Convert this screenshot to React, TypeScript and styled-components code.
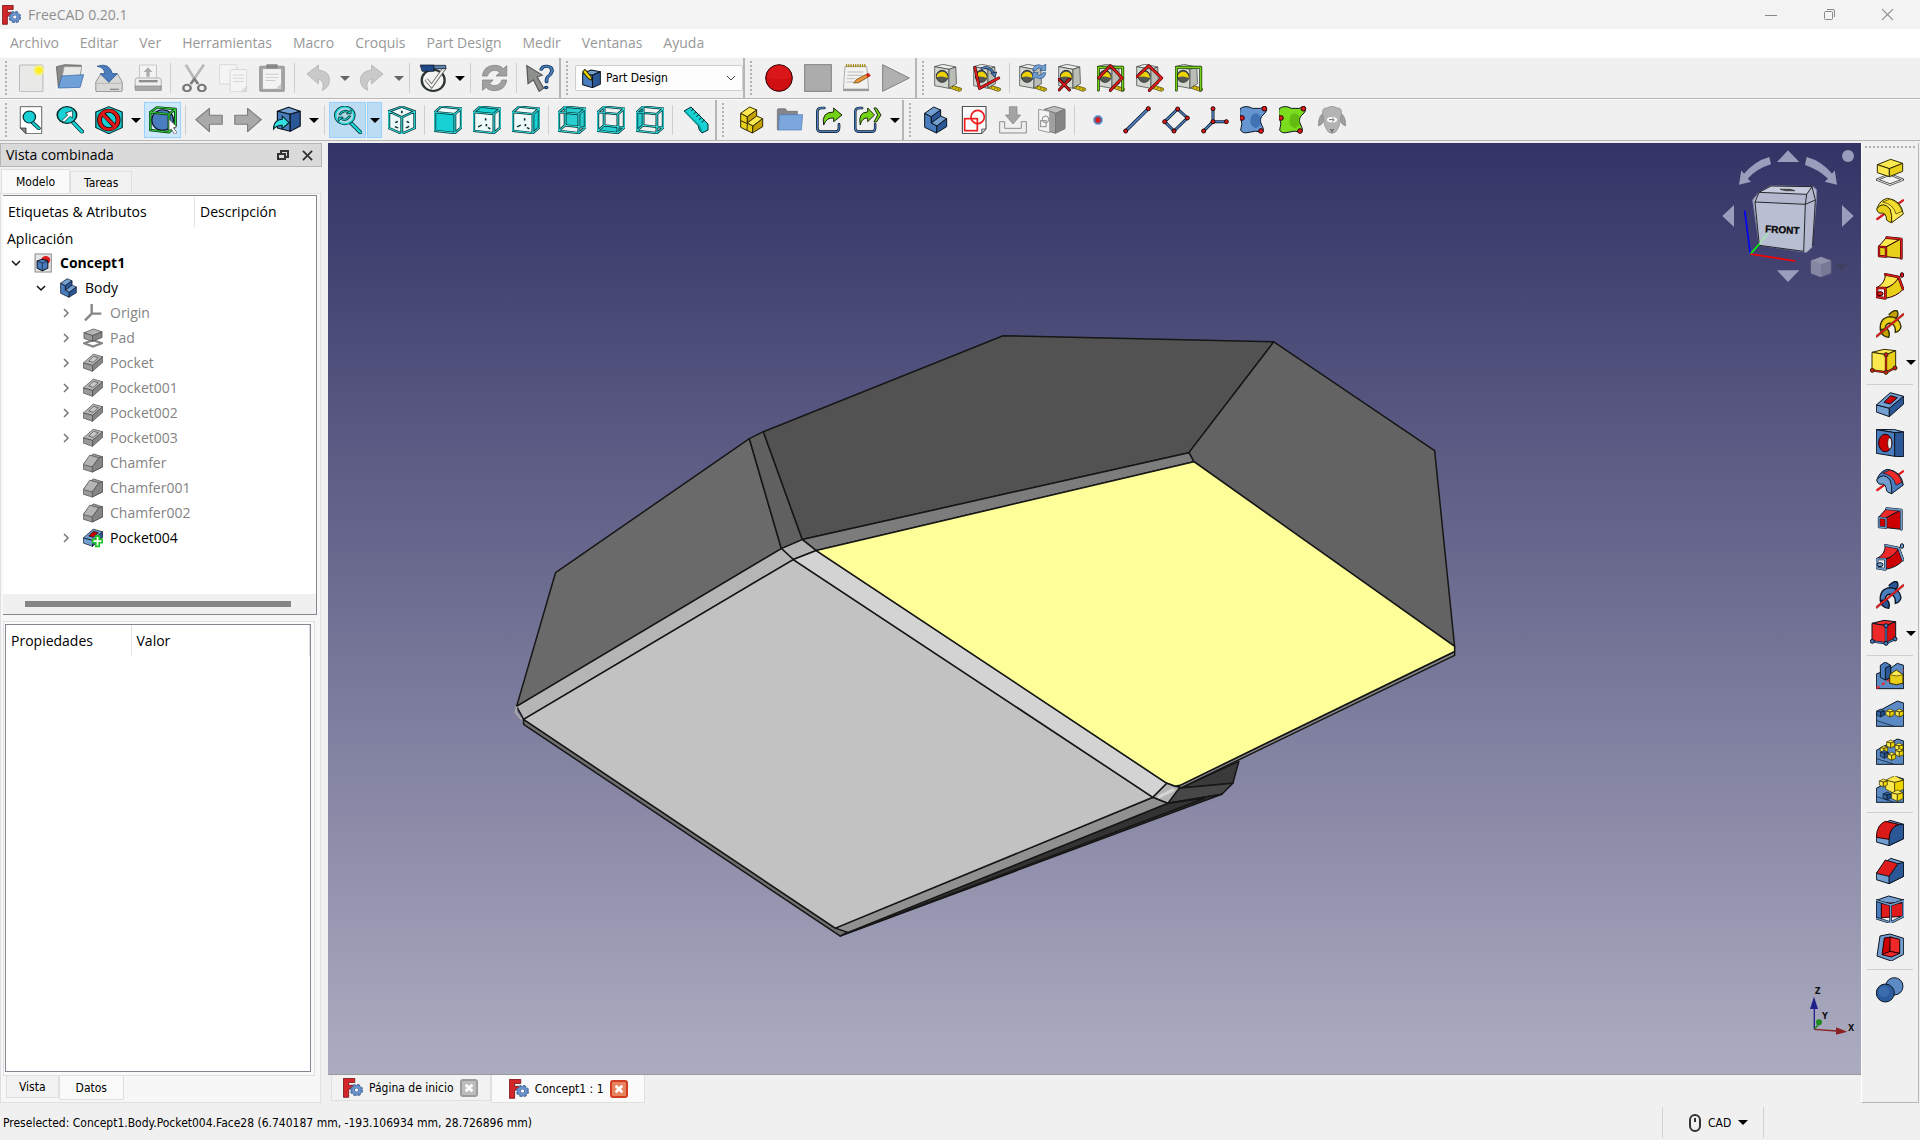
import React from "react";
import styled, { createGlobalStyle, css } from "styled-components";

const ui = `"Open Sans", "Noto Sans", sans-serif`;
const small = `"DejaVu Sans Condensed", "DejaVu Sans", sans-serif`;
const chrome = "#f0f0f0";
const edge = "#b6b6b6";
const soft = "#e0e0e0";
const frame = "#828790";

const GlobalStyle = createGlobalStyle`
  * { box-sizing: border-box; }
  body { margin: 0; background: ${chrome}; font-family: ${ui}; font-size: 14px; color: #000; }
  button, select { font: inherit; color: inherit; margin: 0; padding: 0; border: 0; background: none; }
  svg { display: block; flex: none; }
`;

/* ---------- layout ---------- */

const Window = styled.div`
  display: flex;
  flex-direction: column;
  height: 100vh;
  min-height: 700px;
  overflow: hidden;
  background: ${chrome};
`;

const TitleBar = styled.header`
  display: flex;
  align-items: center;
  height: 29px;
  flex: none;
  padding: 0 4px 0 2px;
  background: #f3f3f3;
`;

const AppTitle = styled.h1`
  flex: 1;
  margin: 0 0 0 7px;
  font-size: 14px;
  font-weight: 400;
  line-height: 20px;
  color: #8f8f8f;
`;

const WindowButton = styled.button`
  display: flex;
  justify-content: center;
  align-items: center;
  width: 58px;
  height: 28px;
`;

const MenuBar = styled.nav`
  display: flex;
  gap: 1px;
  height: 28px;
  flex: none;
  background: #fff;
`;

const MenuItem = styled.button`
  padding: 0 10px;
  font-size: 14px;
  line-height: 28px;
  color: #989898;
`;

const ToolRow = styled.div`
  display: flex;
  flex: none;
  height: 42px;
  border-top: 1px solid #fafafa;
`;

const Bar = styled.div<{ $fill?: boolean }>`
  display: flex;
  align-items: center;
  flex: ${(p) => (p.$fill ? "1 0 auto" : "none")};
  border-right: ${(p) => (p.$fill ? "0" : `2px solid ${edge}`)};
  border-bottom: 1px solid ${edge};
`;

const Grip = styled.span`
  width: 2px;
  height: 34px;
  margin: 0 4px 0 5px;
  background: repeating-linear-gradient(#b0b0b0 0 2px, transparent 2px 4px);
`;

const activeLook = css<{ $active?: boolean; $deep?: boolean }>`
  ${(p) => p.$active && css`
    background: ${p.$deep ? "#bbdcf2" : "#cce8ff"};
    border-color: #99d1ff;
  `}
`;

const ToolButton = styled.button<{ $active?: boolean; $deep?: boolean }>`
  display: flex;
  justify-content: center;
  align-items: center;
  width: 37px;
  height: 36px;
  margin: 0 1px;
  border: 1px solid transparent;
  ${activeLook}
`;

const ArrowButton = styled.button<{ $active?: boolean; $deep?: boolean }>`
  display: flex;
  justify-content: center;
  align-items: center;
  width: 15px;
  height: 36px;
  border: 1px solid transparent;
  ${activeLook}
`;

const Divider = styled.span`
  width: 1px;
  height: 30px;
  margin: 0 3px;
  background: #cfcfcf;
`;

const Combo = styled.label`
  display: flex;
  align-items: center;
  gap: 5px;
  width: 168px;
  height: 26px;
  padding: 0 6px;
  border: 1px solid #cfcfcf;
  border-radius: 2px;
  background: #fdfdfd;
`;

const ComboSelect = styled.select`
  flex: 1;
  min-width: 0;
  appearance: none;
  font-family: ${small};
  font-size: 12px;
  outline: none;
`;

const Work = styled.main`
  display: flex;
  flex: 1;
  min-height: 0;
  padding-top: 2px;
`;

const Dock = styled.aside`
  display: flex;
  flex-direction: column;
  width: 322px;
  margin-right: 6px;
`;

const DockTitle = styled.div`
  display: flex;
  align-items: center;
  height: 24px;
  flex: none;
  padding: 0 1px 0 5px;
  border: 1px solid ${edge};
  background: #dadada;
  h2 { flex: 1; margin: 0; font-size: 14px; font-weight: 400; line-height: 20px; }
`;

const DockButton = styled.button`
  display: flex;
  justify-content: center;
  align-items: center;
  width: 25px;
  height: 20px;
`;

const TabRow = styled.div<{ $low?: boolean }>`
  display: flex;
  flex: none;
  align-items: ${(p) => (p.$low ? "flex-start" : "flex-end")};
  height: ${(p) => (p.$low ? "26px" : "24px")};
  padding-left: ${(p) => (p.$low ? "3px" : "1px")};
  margin-top: ${(p) => (p.$low ? "0" : "2px")};
`;

const Tab = styled.button<{ $on?: boolean }>`
  display: flex;
  align-items: center;
  height: ${(p) => (p.$on ? "24px" : "22px")};
  padding: 0 ${(p) => (p.$on ? "14px" : "13px")};
  border: 1px solid ${soft};
  border-width: 1px 1px 0 1px;
  background: ${(p) => (p.$on ? "#fafafa" : "#f2f2f2")};
  font-family: ${small};
  font-size: 12px;
`;

const LowTab = styled(Tab)`
  padding: 0 ${(p) => (p.$on ? "16px" : "12px")};
  border-width: 0 1px 1px 1px;
`;

const Pane = styled.div`
  display: flex;
  flex-direction: column;
  flex: 1;
  min-height: 0;
  width: 321px;
  padding: 1px 2px 0 2px;
  border: 1px solid ${soft};
  background: #f7f7f7;
`;

const TreeBox = styled.section`
  display: flex;
  flex-direction: column;
  flex: none;
  height: 420px;
  margin-right: 1px;
  border: 1px solid ${frame};
  border-left: 0;
  background: #fff;
`;

const TreeHead = styled.div`
  display: grid;
  grid-template-columns: 191px 1fr;
  margin-top: 1px;
  line-height: 30px;
  span { padding-left: 5px; }
  span + span { border-left: 1px solid #e2e2e2; padding-left: 5px; }
`;

const TreeList = styled.ul`
  flex: 1;
  margin: 0;
  padding: 0;
  list-style: none;
`;

const TreeRow = styled.li<{ $depth: number; $dim?: boolean; $bold?: boolean }>`
  display: flex;
  align-items: center;
  height: 25px;
  padding-left: ${(p) => p.$depth * 25 + 6}px;
  color: ${(p) => (p.$dim ? "#838383" : "#000")};
  font-weight: ${(p) => (p.$bold ? 700 : 400)};
  span { padding-left: 7px; }
`;

const TreeRoot = styled.li`
  padding-left: 4px;
  line-height: 23px;
`;

const Twist = styled.button`
  display: flex;
  justify-content: center;
  align-items: center;
  width: 14px;
  height: 20px;
  margin-right: 10px;
`;

const ScrollTrack = styled.div`
  height: 20px;
  flex: none;
  padding: 7px 25px 0 22px;
  background: #f0f0f0;
`;

const ScrollThumb = styled.div`
  height: 6px;
  background: #858585;
`;

const PropPane = styled.section`
  display: flex;
  flex: 1;
  min-height: 0;
  margin: 6px 3px 0 0;
  padding: 2px 3px 3px 1px;
  border: 1px solid ${soft};
  background: #fafafa;
`;

const PropBox = styled.div`
  flex: 1;
  border: 1px solid ${frame};
  background: #fff;
`;

const PropTable = styled.table`
  width: 100%;
  border-collapse: collapse;
  table-layout: fixed;
  th {
    padding: 0 0 0 5px;
    text-align: left;
    font-weight: 400;
    line-height: 31px;
    border-right: 1px solid #e2e2e2;
  }
  th:first-child { width: 125px; }
`;

const Center = styled.section`
  display: flex;
  flex-direction: column;
  flex: 1;
  min-width: 0;
`;

const Viewport = styled.div`
  position: relative;
  flex: 1;
  min-height: 0;
  border-bottom: 1px solid #9a9a9a;
  background: linear-gradient(#333366, #acacc1);
  overflow: hidden;
`;

const Scene = styled.svg`
  width: 100%;
  height: 100%;
`;

const NavCube = styled.svg`
  position: absolute;
  top: 0;
  right: 0;
`;

const AxisCross = styled.svg`
  position: absolute;
  right: 0;
  bottom: 34px;
`;

const DocTabs = styled.div`
  display: flex;
  align-items: flex-start;
  height: 28px;
  flex: none;
  padding-left: 3px;
`;

const DocTab = styled.div<{ $on?: boolean }>`
  display: flex;
  align-items: center;
  gap: 6px;
  height: ${(p) => (p.$on ? "28px" : "26px")};
  padding: 0 ${(p) => (p.$on ? "16px" : "12px")} 0 ${(p) => (p.$on ? "17px" : "11px")};
  border: 1px solid ${soft};
  border-top: 0;
  background: ${(p) => (p.$on ? "#fafafa" : "#f2f2f2")};
`;

const DocName = styled.button`
  font-family: ${small};
  font-size: 12px;
  line-height: 24px;
`;

const CloseTab = styled.button<{ $hot?: boolean }>`
  display: flex;
  justify-content: center;
  align-items: center;
  width: 18px;
  height: 18px;
  border: 2px solid ${(p) => (p.$hot ? "#d23c20" : "#9c9c9c")};
  border-radius: 3px;
  background: ${(p) => (p.$hot ? "#e8825f" : "#bdbdbd")};
`;

const SideBar = styled.div`
  display: flex;
  flex-direction: column;
  align-items: center;
  width: 58px;
  border-left: 1px solid #fff;
  border-right: 1px solid ${edge};
  border-bottom: 1px solid ${edge};
  margin-right: 1px;
`;

const SideGrip = styled.span`
  width: 50px;
  height: 2px;
  margin: 3px 0 6px;
  flex: none;
  background: repeating-linear-gradient(90deg, #b0b0b0 0 2px, transparent 2px 4px);
`;

const SideRow = styled.div<{ $menu?: boolean }>`
  display: flex;
  justify-content: ${(p) => (p.$menu ? "flex-end" : "center")};
  width: 100%;
  height: 38px;
  flex: none;
`;

const SideDivider = styled.span`
  width: 46px;
  height: 1px;
  flex: none;
  margin: 2px 0;
  background: #cfcfcf;
`;

const StatusBar = styled.footer`
  display: flex;
  align-items: center;
  height: 37px;
  flex: none;
  padding: 2px 156px 0 3px;
  font-family: ${small};
  font-size: 12px;
  output { flex: 1; }
`;

const NavStyle = styled.button`
  display: flex;
  align-items: center;
  gap: 7px;
  width: 102px;
  height: 31px;
  padding-left: 26px;
  border-left: 1px solid #d2d2d2;
  border-right: 1px solid #d2d2d2;
`;

const Spacer = styled.span`
  width: 3px;
`;

/* ---------- icon drawing ---------- */

type Draw = { box: [number, number, number, number]; art: React.ReactNode };

const TEAL = "#17d1d4";
const TEAL_L = "#34e0e2";
const TEAL_D = "#06989a";
const INK = "#0b1521";

const Wire = ({ d, c, o = INK, w = 4, k = 5 }: { d: string; c: string; o?: string; w?: number; k?: number }) => (
  <g fill="none" strokeLinecap="round" strokeLinejoin="round">
    <path d={d} stroke={o} strokeWidth={w + k} />
    <path d={d} stroke={c} strokeWidth={w} />
  </g>
);

const Face = ({ p, f, s = INK, w = 3 }: { p: string; f: string; s?: string; w?: number }) => (
  <polygon points={p} fill={f} stroke={s} strokeWidth={w} strokeLinejoin="round" />
);

const Dot = ({ x, y, r = 6, f = "#e01b1b", s = "#280000" }: { x: number; y: number; r?: number; f?: string; s?: string }) => (
  <circle cx={x} cy={y} r={r} fill={f} stroke={s} strokeWidth="3" />
);

const F = "2,19 53,25 53,84 2,77";
const T = "2,19 18,2 69,8 53,25";
const R = "53,25 69,8 69,67 53,84";
const BK = "18,2 69,8 69,67 18,60";
const BT = "2,77 18,60 69,67 53,84";
const LF = "2,19 18,2 18,60 2,77";
const solidFrame = "M2 19L53 25L53 84L2 77ZM2 19L18 2L69 8L53 25M69 8L69 67L53 84";
const openFrame = solidFrame + "M18 2L18 60L2 77M18 60L69 67";

const cube = (face: string, open: boolean): Draw => ({
  box: [0, 0, 71, 87],
  art: (
    <>
      {!open && <polygon points="2,19 18,2 69,8 69,67 53,84 2,77" fill="#eefafa" />}
      <polygon points={face} fill={open ? TEAL_D : TEAL} />
      {open && <polygon points={face} fill={TEAL_L} opacity="0.75" />}
      <Wire d={open ? openFrame : solidFrame} c={TEAL_L} o="#042a2a" w={3} k={4} />
      {!open && face !== F && <path d="M13 65l9-6M34 56v7M32 38v7M38 67l6 4" stroke="#042a2a" strokeWidth="4" />}
    </>
  ),
});

const Tape = () => (
  <g strokeLinejoin="round">
    <polygon points="146,103 185,115 185,121 178,124 146,113" fill="#e3c600" stroke="#302b00" strokeWidth="2" />
    <path d="M158 108v5M168 112v5M177 115v5" stroke="#302b00" strokeWidth="2" />
    <polygon points="103,50 128,43 168,51 147,58" fill="#eeeeec" stroke="#2e3436" strokeWidth="2" />
    <polygon points="103,50 147,58 147,115 103,107" fill="#d3d7cf" stroke="#2e3436" strokeWidth="2" />
    <polygon points="147,58 168,51 170,101 147,115" fill="#babdb6" stroke="#2e3436" strokeWidth="2" />
    <circle cx="126" cy="79" r="18" fill="#555753" stroke="#2e3436" strokeWidth="3" />
    <path d="M109 82a17 18 0 0 1 34 2q-16-8-34-2z" fill="#edd400" />
  </g>
);

const tape = (extra?: React.ReactNode): Draw => ({ box: [101, 42, 86, 84], art: <><Tape />{extra}</> });

const steps = (a: string, b: string, c: string, split?: boolean, s = INK): Draw => ({
  box: [58, 168, 84, 84],
  art: (
    <>
      <Face p="69,190 89,200 89,219 106,228 104,249 69,232" f={b} s={s} />
      <Face p="69,190 96,171 117,180 89,200" f={a} s={s} />
      <Face p="89,200 117,180 117,198 89,219" f={c} s={s} />
      <Face p="89,219 117,198 135,206 106,228" f={a} s={s} />
      <Face p="106,228 135,206 135,230 104,249" f={c} s={s} />
      {split && <path d="M69 212L89 221L88 241" fill="none" stroke={s} strokeWidth="3" />}
    </>
  ),
});

const undo = (flip: boolean): Draw => ({
  box: [0, 0, 68, 84],
  art: (
    <g transform={flip ? "translate(68 0) scale(-1 1)" : undefined}>
      <path d="M7 30L35 3V18Q64 22 62 52Q60 72 44 79Q52 52 35 45V60Z" fill="#c9c9c9" stroke="#b0b0b0" strokeWidth="2" />
    </g>
  ),
});

const bigArrow = (flip: boolean): Draw => ({
  box: [0, 0, 68, 84],
  art: (
    <g transform={flip ? "translate(68 0) scale(-1 1)" : undefined}>
      <path d="M2 41L35 7V28H66V55H35V77Z" fill="#a9a9a9" stroke="#7e7e7e" strokeWidth="3" strokeLinejoin="round" />
    </g>
  ),
});

const blob = (a: string, b: string): Draw => ({
  box: [1013, 168, 84, 84],
  art: (
    <>
      <path d="M1013 176Q1030 164 1050 175Q1075 178 1090 170Q1098 180 1085 192Q1068 205 1078 225Q1088 240 1078 247Q1060 240 1040 247Q1020 252 1015 240Q1022 220 1015 205Q1010 190 1013 176Z" fill={a} stroke={INK} strokeWidth="3" />
      <ellipse cx="1060" cy="212" rx="16" ry="22" fill={b} opacity="0.5" />
      <Dot x={1086} y={176} r={7} /><Dot x={1019} y={204} r={7} /><Dot x={1076} y={243} r={7} />
    </>
  ),
});

const revolve = (a: string, b: string, axis: string, s: string, mid: string): Draw => ({
  box: [528, 168, 84, 84],
  art: (
    <>
      <path d="M532 237L609 181" stroke={axis} strokeWidth="7" strokeLinecap="round" />
      <path d="M531 205Q540 180 562 175Q604 180 610 222L575 248Q573 212 531 205Z" fill={b} stroke={s} strokeWidth="3" strokeLinejoin="round" />
      <path d="M548 186L570 177Q598 186 606 214L588 222Q580 192 548 186Z" fill={mid} stroke={s} strokeWidth="2" />
      <path d="M530 206Q550 182 570 207Q577 224 575 248Q566 246 560 240Q558 214 540 220Q530 216 530 206Z" fill={a} stroke={s} strokeWidth="3" strokeLinejoin="round" />
    </>
  ),
});

const loft = (a: string, b: string, rim: string, s: string): Draw => ({
  box: [528, 283, 84, 84],
  art: (
    <>
      <Face p="536,320 560,293 604,297 558,322" f={a} s={s} />
      <Face p="558,322 604,297 604,356 558,351" f={b} s={s} />
      <Wire d="M560 294L604 298L604 356" c={rim} o={s} w={5} k={3} />
      <Face p="537,321 558,322 558,351 537,350" f={b} s={s} />
      <Wire d="M537 321L558 323L558 351L537 349Z" c={rim} o={s} w={4} k={3} />
    </>
  ),
});

const pipe = (a: string, b: string, rim: string, s: string): Draw => ({
  box: [528, 392, 84, 84],
  art: (
    <>
      <path d="M532 438Q556 425 556 399L597 406Q590 430 556 440Z" fill={a} stroke={s} strokeWidth="3" />
      <path d="M556 441Q584 432 597 406L610 443Q590 466 556 471Z" fill={b} stroke={s} strokeWidth="3" />
      <Wire d="M556 399L596 407L609 443" c={rim} o={s} w={5} k={3} />
      <Wire d="M531 440L556 440L556 471L531 467Z" c={rim} o={s} w={5} k={3} />
      <ellipse cx="540" cy="457" rx="9" ry="6" fill={rim} stroke={s} strokeWidth="3" />
      <ellipse cx="606" cy="401" rx="5" ry="7" fill={rim} stroke={s} strokeWidth="3" />
    </>
  ),
});

const helix = (a: string, b: string, axis: string, s: string): Draw => ({
  box: [528, 506, 84, 84],
  art: (
    <>
      <path d="M566 520Q584 502 592 510Q600 530 572 536" fill={b} stroke={s} strokeWidth="4" />
      <path d="M542 562Q540 584 566 588Q572 574 560 560Z" fill={b} stroke={s} strokeWidth="4" />
      <path d="M541 565Q538 528 572 526Q600 530 603 556Q600 570 586 573Q588 552 574 546Q556 544 555 563Z" fill={a} stroke={s} strokeWidth="4" />
      <path d="M530 585L610 519" stroke={s} strokeWidth="9" strokeLinecap="round" opacity="0.35" />
      <path d="M530 585L610 519" stroke={axis} strokeWidth="6" strokeLinecap="round" />
    </>
  ),
});

const prim = (a: string, b: string, node: string, s: string): Draw => ({
  box: [508, 621, 84, 84],
  art: (
    <>
      <Face p="514,634 550,625 585,629 557,641" f={a} s={s} />
      <Face p="514,634 557,641 557,693 514,687" f={a} s={s} />
      <Face p="557,641 585,629 585,681 557,693" f={b} s={s} />
      <Wire d="M556 641V694M515 688L556 694L583 681" c={node} o={s} w={4} k={3} />
      <Dot x={556} y={641} f={node} s={s} /><Dot x={515} y={688} f={node} s={s} />
      <Dot x={556} y={694} f={node} s={s} /><Dot x={583} y={681} f={node} s={s} />
    </>
  ),
});

const Mini = ({ x, y, s = 12, dark }: { x: number; y: number; s?: number; dark?: boolean }) => {
  const k = dark ? ["#3465a4", "#204a87"] : ["#fce94f", "#edd400"];
  return (
    <g strokeLinejoin="round" stroke={dark ? INK : "#302b00"} strokeWidth="2">
      <polygon points={`${x - s},${y - s / 2} ${x},${y - s} ${x + s},${y - s / 2} ${x},${y - s / 4}`} fill={k[0]} />
      <polygon points={`${x - s},${y - s / 2} ${x},${y - s / 4} ${x},${y + s} ${x - s},${y + s / 2}`} fill={k[0]} />
      <polygon points={`${x},${y - s / 4} ${x + s},${y - s / 2} ${x + s},${y + s / 2} ${x},${y + s}`} fill={k[1]} />
    </g>
  );
};

const bed = <><Face p="289,67 352,33 371,39 371,109 289,109" f="#5b8ac4" /><path d="M290 92L340 108" stroke={INK} strokeWidth="2" /></>;

const B1 = "#729fcf", B2 = "#4a7dbd", B3 = "#2c5797";
const Y1 = "#fce94f", Y2 = "#e8cf1a", YS = "#302b00";
const R1 = "#ef2929", R2 = "#cc0000", RS = "#280000";
const G1 = "#b5b5b5", G2 = "#9a9a9a", G3 = "#858585", GS = "#4c4c4c";

const pocket = (a: string, b: string, c: string, hole: string, s: string): Draw => ({
  box: [108, 36, 84, 84],
  art: (
    <>
      <Face p="109,78 151,41 191,52 148,88" f={a} s={s} />
      <Face p="109,78 148,88 148,113 109,99" f={b} s={s} />
      <Face p="148,88 191,52 191,75 148,113" f={c} s={s} />
      <Face p="132,70 152,50 172,56 151,75" f={hole} s={s} />
    </>
  ),
});

const chamfer = (top: string, b: string, c: string, s: string): Draw => ({
  box: [288, 498, 84, 84],
  art: (
    <>
      <Face p="289,547 318,512 332,502 371,514 371,556 327,578 289,566" f={b} s={s} />
      <Face p="327,556 354,518 371,514 371,556 327,578" f={c} s={s} />
      <Face p="289,547 316,507 354,518 327,556" f={top} s={s} />
    </>
  ),
});

const icons: Record<string, Draw> = {
  new: { box: [42, 192, 68, 84], art: <><rect x="48" y="195" width="57" height="80" rx="3" fill="#e9e9e7" stroke="#a5a5a5" strokeWidth="2" /><ellipse cx="95" cy="211" rx="14" ry="17" fill="#f7f27a" opacity="0.7" /><ellipse cx="95" cy="211" rx="8" ry="10" fill="#ffee1c" /></> },
  open: { box: [137, 192, 72, 84], art: <><path d="M143 262L138 200L160 194L202 196L198 250Z" fill="#8a8a88" stroke="#555" strokeWidth="2" /><path d="M152 235L158 200H203L198 235Z" fill="#e8e8e6" stroke="#999" strokeWidth="2" /><path d="M143 264L152 228L208 224L199 262Z" fill="#6fa0d8" stroke="#3465a4" strokeWidth="2" /></> },
  save: { box: [233, 192, 69, 84], art: <><path d="M235 246L247 222H289L300 246V272Q300 275 296 275H238Q235 275 235 272Z" fill="#d9d9d7" stroke="#777" strokeWidth="2" /><path d="M238 250H298" stroke="#aaa" strokeWidth="2" /><path d="M270 268h22" stroke="#888" strokeWidth="4" /><path d="M238 199Q268 186 276 221H288L267 247L246 221H257Q256 202 238 199Z" fill="#4a7dbd" stroke="#204a87" strokeWidth="2" /></> },
  print: { box: [328, 192, 70, 84], art: <><rect x="342" y="195" width="42" height="42" fill="#f3f3f3" stroke="#bbb" strokeWidth="2" /><path d="M363 202L374 216H367V230H359V216H352Z" fill="#aaa" /><path d="M331 240Q331 234 337 234H390Q396 234 396 240V262H331Z" fill="#eee" stroke="#999" strokeWidth="2" /><rect x="340" y="240" width="47" height="7" fill="#8d8d8d" /><rect x="331" y="258" width="65" height="13" fill="#a8a8a8" stroke="#888" strokeWidth="2" /></> },
  cut: { box: [440, 192, 68, 84], art: <><path d="M454 194L483 252M498 194L466 252" stroke="#b9b9b9" strokeWidth="7" /><g fill="none" stroke="#7a7a7a" strokeWidth="6"><ellipse cx="457" cy="264" rx="9" ry="10" /><ellipse cx="493" cy="264" rx="9" ry="10" /><path d="M466 252L475 236L484 252" /></g></> },
  copy: { box: [536, 190, 68, 86], art: <g fill="#f4f4f4" stroke="#cfcfcf" strokeWidth="2"><rect x="537" y="192" width="42" height="60" rx="3" /><rect x="563" y="207" width="40" height="68" rx="3" /><path d="M570 224h26M570 234h26M570 244h26" stroke="#d5d5d5" strokeWidth="3" /><path d="M590 275L603 258V275Z" fill="#ddd" /></g> },
  paste: { box: [630, 190, 68, 88], art: <><rect x="634" y="197" width="60" height="79" rx="3" fill="#a5a5a5" stroke="#858585" strokeWidth="2" /><rect x="642" y="206" width="44" height="62" fill="#f3f3f3" /><path d="M648 222h32M648 232h32M648 242h24" stroke="#ccc" strokeWidth="3" /><path d="M674 268L686 252V268Z" fill="#ccc" /><rect x="650" y="191" width="28" height="13" rx="3" fill="#888" /></> },
  undo: undo(false),
  redo: undo(true),
  check: { box: [1024, 192, 71, 84], art: <><ellipse cx="1060" cy="241" rx="29" ry="32" fill="#f3f3f1" stroke="#2e3436" strokeWidth="6" /><path d="M1042 238L1056 258L1090 202" fill="none" stroke="#555753" strokeWidth="10" /><path d="M1042 238L1056 258L1090 202" fill="none" stroke="#eeeeec" strokeWidth="6" /><path d="M1027 195H1062V214H1032Z" fill="#204a87" stroke={INK} strokeWidth="2" /><path d="M1062 196H1092V206H1062Z" fill="#5b7fae" stroke={INK} strokeWidth="2" /></> },
  refresh: { box: [1176, 192, 68, 84], art: <g fill="#a0a0a0" stroke="#808080" strokeWidth="2"><path d="M1182 228Q1184 198 1210 196Q1226 196 1232 206L1241 197V228H1215L1224 217Q1216 208 1206 212Q1196 216 1194 228Z" /><path d="M1241 240Q1238 270 1212 272Q1196 272 1191 262L1182 271V240H1208L1199 251Q1207 260 1217 256Q1227 252 1229 240Z" /></g> },
  whats: { box: [1289, 190, 68, 88], art: <><path d="M1291 195L1329 225L1316 231L1332 266L1321 276L1307 240L1294 252Z" fill="#8d8f8c" stroke="#555753" strokeWidth="3" /><Wire d="M1326 207Q1329 196 1340 197Q1353 199 1352 213Q1350 223 1342 230Q1338 236 1339 246" c="#4a7dbd" o="#14345f" w={5} k={4} /><Dot x={1338} y={264} r={4} f="#4a7dbd" s="#14345f" /></> },
  record: { box: [611, 42, 84, 84], art: <><circle cx="653" cy="84" r="40" fill="#cf0f12" stroke="#280000" strokeWidth="3" /><path d="M617 82a36 36 0 0 1 72 0q-36 12-72 0z" fill="#e01c1e" opacity="0.6" /></> },
  stop: { box: [726, 42, 84, 84], art: <rect x="728" y="44" width="80" height="80" fill="#acacac" stroke="#808080" strokeWidth="3" /> },
  edit: { box: [844, 42, 86, 84], art: <><path d="M850 50H917L923 122H845Z" fill="#f2f2f0" stroke="#8b8b88" strokeWidth="2" /><path d="M845 116H923V123H845Z" fill="#9a9a98" /><path d="M853 47h60" stroke="#a08000" strokeWidth="8" strokeDasharray="4 3" /><path d="M858 66h48M857 76h48M856 86h26M855 96h20" stroke="#bbb" strokeWidth="3" /><path d="M876 99L886 88L922 70L928 77L892 98Z" fill="#e8963c" stroke="#5c3500" strokeWidth="2" /><path d="M914 74L922 70L928 77L920 82Z" fill="#e01b1b" /></> },
  play: { box: [960, 42, 84, 84], art: <path d="M962 44L1042 84L962 124Z" fill="#b0b0b0" stroke="#808080" strokeWidth="3" /> },
  tape: tape(),
  tapeAngle: tape(<><Wire d="M128 56Q150 44 165 72" c={B2} w={5} k={3} /><path d="M156 70L174 66L168 82Z" fill={B2} stroke={INK} strokeWidth="2" /><Wire d="M107 53L121 115L180 84" c="#e01b1b" o={RS} w={6} k={3} /></>),
  tapeRefresh: tape(<g fill={B1} stroke="#204a87" strokeWidth="2"><path d="M143 62Q145 44 162 44L174 48L183 42V62H166L171 56Q158 50 152 62Z" /><path d="M183 68Q181 86 164 86L152 82L143 88V68H160L155 74Q168 80 174 68Z" /></g>),
  tapeClear: tape(<Wire d="M104 88L136 120M136 88L104 120" c="#e01b1b" o={RS} w={5} k={4} />),
  tapeAll: tape(<><Wire d="M105 120V52H180V120" c="#73d216" o="#17230e" w={5} k={4} /><Wire d="M106 84L142 47L178 84L142 121" c="#e01b1b" o={RS} w={6} k={3} /></>),
  tape3d: tape(<Wire d="M104 80L140 47L180 84L142 121" c="#e01b1b" o={RS} w={6} k={3} />),
  tapeDelta: tape(<Wire d="M105 120V52H180V120" c="#73d216" o="#17230e" w={5} k={4} />),

  fit: { box: [42, 318, 68, 84], art: <><path d="M50 320H102V401H64L50 384Z" fill="#fff" stroke="#2e3436" strokeWidth="2" /><path d="M50 384H64V401Z" fill="#888a85" stroke="#2e3436" strokeWidth="2" /><Wire d="M80 368L95 385" c={TEAL} o="#042a2a" w={6} k={4} /><ellipse cx="72" cy="351" rx="15" ry="18" fill={TEAL} stroke="#042a2a" strokeWidth="3" /></> },
  fitSel: { box: [136, 318, 69, 84], art: <><Wire d="M179 368L200 395" c={TEAL} o="#042a2a" w={7} k={4} /><ellipse cx="163" cy="345" rx="24" ry="25" fill={TEAL} stroke="#042a2a" strokeWidth="4" /><path d="M150 362L165 345L159 339L177 332V354L171 349L156 366Z" fill="#fff" stroke="#042a2a" strokeWidth="2" /></> },
  draw: { box: [233, 318, 69, 84], art: <><Face p="235,336 267,320 300,336 300,383 267,401 235,383" f={TEAL} s="#042a2a" /><g fill="none"><ellipse cx="267" cy="360" rx="23" ry="28" stroke="#280000" strokeWidth="12" /><path d="M252 340L282 380" stroke="#280000" strokeWidth="12" /><ellipse cx="267" cy="360" rx="23" ry="28" stroke="#dd1a1a" strokeWidth="8" /><path d="M250 340L283 380" stroke="#dd1a1a" strokeWidth="8" /></g></> },
  bbox: { box: [368, 322, 70, 84], art: <><ellipse cx="402" cy="364" rx="27" ry="31" fill={B2} stroke={INK} strokeWidth="3" /><Wire d="M371 341L418 347V401L371 394ZM371 341L388 326L434 331L418 347M434 331V382L418 401" c="#2fd33c" o="#05320a" w={3} k={4} /><path d="M418 362L437 384L429 387L438 402L432 407L424 391L418 396Z" fill="#fff" stroke="#555" strokeWidth="2" /></> },
  back: bigArrow(false),
  fwd: bigArrow(true),
  linkGo: { box: [667, 318, 70, 84], art: <><Face p="678,334 706,322 735,334 710,343" f={B1} /><Face p="678,334 710,343 710,394 678,384" f={B2} /><Face p="710,343 735,334 735,378 710,394" f={B3} /><path d="M668 388Q668 360 690 358V348L707 368L690 386V376Q676 376 668 388Z" fill={TEAL_L} stroke="#042a2a" strokeWidth="3" /></> },
  sync: { box: [819, 320, 70, 86], art: <><Wire d="M863 374L885 401" c={TEAL} o="#042a2a" w={7} k={4} /><ellipse cx="846" cy="349" rx="23" ry="26" fill="none" stroke="#042a2a" strokeWidth="8" /><ellipse cx="846" cy="349" rx="23" ry="26" fill="#a9d8e4" stroke={TEAL} strokeWidth="4" /><Wire d="M834 345Q845 328 857 341M858 352Q847 370 835 357" c={TEAL} o="#042a2a" w={3} k={4} /><path d="M850 344H862V331ZM842 354H830V367Z" fill={TEAL} stroke="#042a2a" strokeWidth="2" /></> },
  iso: { box: [948, 318, 69, 84], art: <><polygon points="949,334 982,320 1015,334 1015,384 982,401 949,384" fill="#eefafa" /><Wire d="M950 334L982 320L1014 334V384L982 401L950 384ZM950 334L982 352L1014 334M982 352V401" c={TEAL_L} o="#042a2a" w={3} k={4} /><path d="M965 380l8 4M992 384l8-5M982 332v8M966 368l6-4M994 364l6 4" stroke="#042a2a" strokeWidth="4" /></> },
  vFront: cube(F, false),
  vTop: cube(T, false),
  vRight: cube(R, false),
  vRear: cube(BK, true),
  vBottom: cube(BT, true),
  vLeft: cube(LF, true),
  ruler: { box: [358, 168, 84, 84], art: <><Face p="364,183 385,171 436,222 436,240 418,249 410,240 406,226" f={TEAL} s="#042a2a" /><path d="M385 183l8-6M393 192l6-5M401 200l9-7M409 209l6-5M417 217l9-7" stroke="#042a2a" strokeWidth="3" /><path d="M366 184L410 228L418 247" fill="none" stroke={TEAL_D} strokeWidth="4" /></> },
  part: steps(Y1, Y2, "#c4a000", true, YS),
  group: { box: [642, 168, 84, 84], art: <><path d="M646 240V180Q646 176 650 176H670L676 184H706V230Z" fill="#84868a" stroke="#66686b" strokeWidth="2" /><path d="M649 240L652 194H722L718 240Z" fill="#7ba7dd" stroke="#4a78b4" strokeWidth="2" /></> },
  link: { box: [756, 168, 84, 84], art: <><Wire d="M784 174H776Q763 174 763 186V233Q763 245 776 245H816Q828 245 828 233V223" c="#4a7dbd" w={4} k={4} /><path d="M782 225Q774 186 812 186V174L837 195L812 215V204Q790 202 782 225Z" fill="#73d216" stroke="#17230e" strokeWidth="3" /></> },
  linkActs: { box: [872, 168, 90, 84], art: <><Wire d="M898 174H890Q876 174 876 186V233Q876 245 890 245H928Q940 245 940 233V223" c="#4a7dbd" w={4} k={4} /><path d="M892 225Q884 186 916 186V174L938 195L916 215V204Q898 202 892 225Z" fill="#73d216" stroke="#17230e" strokeWidth="3" /><path d="M936 174H944L959 195L944 216H936L948 195Z" fill="#73d216" stroke="#17230e" strokeWidth="3" /></> },
  body: steps(B1, B2, B3),
  sketch: { box: [177, 168, 84, 84], art: <><path d="M184 169H255V237L242 251H184Z" fill="#fbfbfb" stroke="#2e3436" strokeWidth="3" /><path d="M242 251V237H255Z" fill="#ccc" stroke="#2e3436" strokeWidth="2" /><g fill="none" stroke="#ef1d1d" strokeWidth="5"><rect x="191" y="206" width="38" height="36" /><circle cx="230" cy="201" r="20" /></g></> },
  mapSk: { box: [291, 168, 84, 84], art: <><path d="M293 215H308V235H358V215H373V249H293Z" fill="#eee" stroke="#8e8e8e" strokeWidth="3" /><path d="M322 170H345V195H356L333 222L310 195H322Z" fill="#a3a3a3" stroke="#808080" strokeWidth="2" /></> },
  migrate: { box: [408, 168, 86, 84], art: <><Face p="428,178 458,169 491,178 462,190" f="#bdbdbd" s="#777" /><Face p="428,178 462,190 462,250 428,240" f="#a0a0a0" s="#777" /><Face p="462,190 491,178 491,236 462,250" f="#858585" s="#777" /><Face p="410,178 444,184 444,248 410,240" f="#f3f3f3" s="#999" /><g fill="none" stroke="#8a8a8a" strokeWidth="3"><rect x="416" y="212" width="17" height="18" /><circle cx="431" cy="208" r="10" /></g></> },
  point: { box: [546, 168, 84, 84], art: <><circle cx="588" cy="210" r="14" fill={B2} stroke="#9ab8da" strokeWidth="2" /><circle cx="588" cy="210" r="8" fill="#dd1a1a" /></> },
  line: { box: [663, 168, 84, 84], art: <><Wire d="M671 243L739 176" c={B2} w={6} k={4} /><Dot x={671} y={243} /><Dot x={739} y={176} /></> },
  plane: { box: [780, 168, 84, 84], art: <><Wire d="M827 177L856 204L816 243L788 215Z" c={B2} w={5} k={4} /><Dot x={827} y={177} /><Dot x={856} y={204} /><Dot x={816} y={243} /><Dot x={788} y={215} /></> },
  lcs: { box: [897, 168, 84, 84], art: <><Wire d="M933 176V215L905 243M933 215H973" c={B2} w={5} k={4} /><Dot x={933} y={176} /><Dot x={933} y={215} /><Dot x={905} y={243} /><Dot x={973} y={215} /></> },
  binder: blob("#6596d0", "#1b4f96"),
  clone: blob("#7bdc1e", "#4e9a06"),
  sheep: { box: [1245, 168, 84, 84], art: <><path d="M1262 190Q1246 195 1246 228Q1258 226 1264 208ZM1312 190Q1328 195 1328 228Q1316 226 1310 208Z" fill="#a0a0a0" stroke="#808080" strokeWidth="2" /><path d="M1260 196Q1254 172 1272 174Q1287 164 1302 174Q1320 172 1314 196Q1312 230 1298 246Q1287 254 1276 246Q1262 230 1260 196Z" fill="#b4b4b4" stroke="#8a8a8a" strokeWidth="2" /><ellipse cx="1287" cy="209" rx="15" ry="8" fill="#fff" /><path d="M1278 209h12M1288 204l6 5l-6 5" stroke="#666" strokeWidth="3" fill="none" /><path d="M1281 238q6 6 12 0M1287 240v8" stroke="#555" strokeWidth="3" fill="none" /></> },

  wb: { box: [64, 54, 58, 54], art: <><Face p="66,66 92,57 120,62 96,72" f={B1} /><Face p="66,66 96,72 96,107 66,99" f={B2} /><Face p="96,72 120,62 120,97 96,107" f={B3} /><path d="M66 62L73 55L92 76L94 86L84 82Z" fill="#edd400" stroke={YS} strokeWidth="3" /></> },

  pad: { box: [528, 56, 84, 84], art: <><path d="M531 121L570 105L609 121L570 136Z" fill="none" stroke="#444" strokeWidth="7" strokeLinejoin="round" /><path d="M531 121L570 105L609 121L570 136Z" fill="none" stroke="#e0e0de" strokeWidth="3" strokeLinejoin="round" /><Face p="532,76 572,60 608,72 568,88" f={Y1} s={YS} /><Face p="532,76 568,88 568,112 532,100" f={Y1} s={YS} /><Face p="568,88 608,72 608,96 568,112" f={Y2} s={YS} /></> },
  padGray: { box: [528, 56, 84, 84], art: <><path d="M533 120L570 107L607 120L570 134Z" fill="none" stroke={G3} strokeWidth="9" /><Face p="532,76 572,60 608,72 568,88" f={G1} s={GS} /><Face p="532,76 568,88 568,112 532,100" f={G2} s={GS} /><Face p="568,88 608,72 608,96 568,112" f={G3} s={GS} /></> },
  revolve: revolve(Y2, Y1, "#d01c1c", YS, "#f2dc2c"),
  loft: loft(Y1, Y2, "#e01b1b", RS),
  pipe: pipe(Y1, Y2, "#e01b1b", RS),
  helix: helix(Y2, "#c4a000", "#d01c1c", YS),
  prim: prim(Y1, Y2, "#d01c1c", YS),
  pocket: pocket(B1, B1, B3, R2, INK),
  pocketGray: pocket(G1, G2, G3, "#c9c9c9", GS),
  pocketTip: { box: [108, 36, 84, 84], art: <>{pocket(B1, B1, B3, R2, INK).art}<path d="M162 70H176V84H189V98H176V113H162V98H149V84H162Z" fill="#fff" stroke="#1fc428" strokeWidth="7" /></> },
  hole: { box: [108, 147, 84, 84], art: <><Face p="109,149 160,148 191,156 165,158" f={B1} /><Face p="109,149 164,158 164,229 109,220" f={B2} /><Face p="164,158 191,156 191,230 164,229" f={B3} /><ellipse cx="136" cy="189" rx="20" ry="26" fill={R2} stroke={RS} strokeWidth="3" /><ellipse cx="149" cy="190" rx="6" ry="17" fill="#efefef" stroke={RS} strokeWidth="2" /></> },
  groove: revolve(B1, B2, "#e01b1b", INK, R1),
  sLoft: loft(R1, R2, B1, INK),
  sPipe: pipe(R1, R2, B1, INK),
  sHelix: helix(B2, B3, "#e01b1b", INK),
  sPrim: prim(R1, "#d40f12", B2, INK),
  mirror: { box: [108, 846, 84, 84], art: <><Face p="109,882 150,866 172,850 191,856 191,926 109,926" f="#5b8ac4" /><path d="M110 925L190 870" stroke={R1} strokeWidth="6" strokeDasharray="10 9" /><Face p="121,856 136,846 152,856 152,892 136,900 121,892" f={B2} /><Face p="136,864 152,856 152,892 136,900" f={B3} /><path d="M149 884L169 870L189 884V910Q169 918 149 910Z" fill={Y2} stroke={YS} strokeWidth="3" /><path d="M149 884L169 870L189 884Q169 892 149 884Z" fill={Y1} stroke={YS} strokeWidth="2" /></> },
  linear: { box: [288, 30, 84, 84], art: <>{bed}<Mini x={302} y={69} dark /><Mini x={330} y={69} /><Mini x={358} y={69} /></> },
  polar: { box: [288, 30, 84, 84], art: <>{bed}<Mini x={332} y={48} /><Mini x={357} y={57} /><Mini x={312} y={64} s={11} /><Mini x={358} y={74} /><Mini x={313} y={79} dark /><Mini x={335} y={85} /></> },
  multi: { box: [288, 30, 84, 84], art: <>{bed}<Mini x={344} y={56} s={27} /><Mini x={310} y={51} s={12} /><Mini x={321} y={90} s={12} dark /><Mini x={352} y={89} s={17} /></> },
  fillet: { box: [288, 387, 84, 84], art: <><Face p="289,443 300,408 330,391 371,403 371,446 327,467 289,456" f={B1} /><path d="M327 446Q327 414 355 404L371 403V446L327 467Z" fill={B3} stroke={INK} strokeWidth="3" /><path d="M289 442Q290 404 316 394L356 403Q328 412 327 448Z" fill="#dd1a1a" stroke={RS} strokeWidth="3" /></> },
  chamfer: chamfer("#e01b1b", B1, B3, INK),
  chamferGray: chamfer(G1, G2, G3, GS),
  draft: { box: [288, 610, 84, 84], art: <><Face p="289,626 326,613 371,625 332,637" f={B1} /><Face p="289,626 305,632 305,686 289,680" f={B2} /><Face p="304,634 370,634 370,674 304,678" f="#e01b1b" s={RS} /><Wire d="M290 627L332 640L370 627M332 640V693L290 680M332 693L370 674V627" c={B1} w={4} k={4} /></> },
  thick: { box: [288, 721, 84, 84], art: <><Face p="291,790 300,730 330,724 371,737 371,785 334,805" f={B1} /><Face p="313,736 334,733 328,778 306,786" f={R2} s={RS} /><Face p="330,733 359,740 359,782 330,776" f={R1} s={RS} /><Face p="306,786 330,776 359,782 334,793" f={R1} s={RS} /></> },
  bool: { box: [288, 859, 84, 84], art: <><circle cx="343" cy="890" r="26" fill="#5b8ac4" stroke={INK} strokeWidth="3" /><circle cx="316" cy="910" r="27" fill="#2c5c9e" stroke={INK} strokeWidth="3" /><circle cx="312" cy="906" r="16" fill="#4a7dbd" opacity="0.5" /></> },
  axisGray: { box: [252, 486, 60, 60], art: <path d="M278 489V518L258 538M278 518H307" fill="none" stroke={G3} strokeWidth="7" /> },
  doc: { box: [100, 335, 58, 62], art: <><rect x="106" y="338" width="47" height="56" fill="#e6e6e6" stroke="#8a8a8a" strokeWidth="3" /><circle cx="137" cy="357" r="13" fill="#dd1a1a" /><Face p="112,360 127,354 143,360 143,382 127,390 112,382" f={B2} /><path d="M112 361L127 366L143 361M127 366V389" fill="none" stroke={INK} strokeWidth="2" /></> },
  logo: { box: [6, 14, 46, 58], art: <><path d="M7 15H33V27H19V35H31V46H19V70H7Z" fill="#d4252a" stroke="#6a0d10" strokeWidth="2" /><g fill="none" transform="translate(37 49) scale(.85 1)"><circle r="14" stroke="#33507f" strokeWidth="7" strokeDasharray="7 4" /><circle r="10" stroke="#33507f" strokeWidth="10" /><circle r="10" stroke="#6a94cd" strokeWidth="8" /><circle r="14" stroke="#5b84bd" strokeWidth="5" strokeDasharray="6 5" /></g></> },
};

const Ico = ({ n, w = 28, h }: { n: string; w?: number; h?: number }) => (
  <svg width={w} height={h ?? w} viewBox={icons[n].box.join(" ")} preserveAspectRatio="none" aria-hidden="true">
    {icons[n].art}
  </svg>
);

const Caret = ({ dim }: { dim?: boolean }) => (
  <svg width="10" height="5" viewBox="0 0 10 5" aria-hidden="true">
    <path d="M0 0H10L5 5Z" fill={dim ? "#666" : "#000"} />
  </svg>
);

const Cross = ({ size, color, width }: { size: number; color: string; width: number }) => (
  <svg width={size} height={size} viewBox="0 0 12 12" aria-hidden="true">
    <path d="M1 1L11 11M11 1L1 11" stroke={color} strokeWidth={width} />
  </svg>
);

/* ---------- toolbars ---------- */

type Tool = "|" | { n: string; t: string; menu?: boolean; dim?: boolean; on?: boolean };
const t = (n: string, title: string, o: object = {}): Tool => ({ n, t: title, ...o });

const fileTools: Tool[] = [
  t("new", "Nuevo"), t("open", "Abrir"), t("save", "Guardar"), t("print", "Imprimir"), "|",
  t("cut", "Cortar"), t("copy", "Copiar"), t("paste", "Pegar"), "|",
  t("undo", "Deshacer", { menu: true, dim: true }), t("redo", "Rehacer", { menu: true, dim: true }), "|",
  t("check", "Validar", { menu: true }), "|", t("refresh", "Actualizar"), "|", t("whats", "¿Qué es esto?"),
];
const macroTools: Tool[] = [t("record", "Grabar macro"), t("stop", "Detener"), t("edit", "Macros"), t("play", "Ejecutar")];
const measureTools: Tool[] = [
  t("tape", "Medir lineal"), t("tapeAngle", "Medir angular"), "|", t("tapeRefresh", "Refrescar medidas"),
  t("tapeClear", "Borrar medidas"), t("tapeAll", "Conmutar todo"), t("tape3d", "Conmutar 3D"), t("tapeDelta", "Conmutar delta"),
];
const viewTools: Tool[] = [
  t("fit", "Ajustar todo"), t("fitSel", "Ajustar selección"), t("draw", "Estilo de dibujo", { menu: true }),
  t("bbox", "Cuadro delimitador", { on: true }), "|", t("back", "Atrás"), t("fwd", "Adelante"),
  t("linkGo", "Ir al objeto", { menu: true }), "|", t("sync", "Sincronizar vista", { menu: true, on: true }),
  t("iso", "Isométrica"), "|", t("vFront", "Alzado"), t("vTop", "Planta"), t("vRight", "Derecha"), "|",
  t("vRear", "Posterior"), t("vBottom", "Inferior"), t("vLeft", "Izquierda"), "|", t("ruler", "Medir distancia"),
];
const structTools: Tool[] = [t("part", "Crear pieza"), t("group", "Crear grupo"), t("link", "Crear enlace"), t("linkActs", "Acciones de enlace", { menu: true })];
const designTools: Tool[] = [
  t("body", "Crear cuerpo"), t("sketch", "Crear croquis"), t("mapSk", "Asignar croquis"), t("migrate", "Validar croquis"), "|",
  t("point", "Punto"), t("line", "Línea"), t("plane", "Plano"), t("lcs", "Sistema de coordenadas"),
  t("binder", "Forma vinculada"), t("clone", "Clon verde"), t("sheep", "Clonar"),
];
const sideTools: Tool[] = [
  t("pad", "Extruir"), t("revolve", "Revolución"), t("loft", "Puente aditivo"), t("pipe", "Tubo aditivo"),
  t("helix", "Hélice aditiva"), t("prim", "Primitiva aditiva", { menu: true }), "|",
  t("pocket", "Vaciado"), t("hole", "Agujero"), t("groove", "Ranura"), t("sLoft", "Puente sustractivo"),
  t("sPipe", "Tubo sustractivo"), t("sHelix", "Hélice sustractiva"), t("sPrim", "Primitiva sustractiva", { menu: true }), "|",
  t("mirror", "Simetría"), t("linear", "Patrón lineal"), t("polar", "Patrón polar"), t("multi", "Multitransformación"), "|",
  t("fillet", "Redondeo"), t("chamfer", "Chaflán"), t("draft", "Desmoldeo"), t("thick", "Espesor"), "|",
  t("bool", "Operación booleana"),
];

const Tools = ({ items }: { items: Tool[] }) => (
  <>
    {items.map((it, i) =>
      it === "|" ? <Divider key={i} /> : (
        <React.Fragment key={i}>
          <ToolButton $active={it.on} $deep={it.menu} aria-label={it.t}><Ico n={it.n} /></ToolButton>
          {it.menu && <ArrowButton $active={it.on} $deep aria-label={it.t + ", menú"}><Caret dim={it.dim} /></ArrowButton>}
        </React.Fragment>
      )
    )}
  </>
);

/* ---------- tree ---------- */

const tree: { n: string; i: string; d: number; open?: boolean; leaf?: boolean; dim?: boolean; bold?: boolean }[] = [
  { n: "Concept1", i: "doc", d: 0, open: true, bold: true },
  { n: "Body", i: "body", d: 1, open: true },
  { n: "Origin", i: "axisGray", d: 2, dim: true },
  { n: "Pad", i: "padGray", d: 2, dim: true },
  { n: "Pocket", i: "pocketGray", d: 2, dim: true },
  { n: "Pocket001", i: "pocketGray", d: 2, dim: true },
  { n: "Pocket002", i: "pocketGray", d: 2, dim: true },
  { n: "Pocket003", i: "pocketGray", d: 2, dim: true },
  { n: "Chamfer", i: "chamferGray", d: 2, dim: true, leaf: true },
  { n: "Chamfer001", i: "chamferGray", d: 2, dim: true, leaf: true },
  { n: "Chamfer002", i: "chamferGray", d: 2, dim: true, leaf: true },
  { n: "Pocket004", i: "pocketTip", d: 2 },
];

const menus = ["Archivo", "Editar", "Ver", "Herramientas", "Macro", "Croquis", "Part Design", "Medir", "Ventanas", "Ayuda"];

/* ---------- 3D model ---------- */

const faces: [string, string][] = [
  ["1180,789 1239,762 1233,784 1178,789", "#3a3a3a"],
  ["1178,789 1233,784 1222,795 1168,804", "#474747"],
  ["1168,804 1222,795 840,937 846,933", "#333333"],
  ["1153,798 1168,804 846,934 835,929", "#919191"],
  ["523,720 835,929 847,933 840,937 523,725", "#6f6f6f"],
  ["1180,786 1455,652 1455,656 1178,790", "#848484"],
  ["555,573 749,439 781,549 516,707", "#6a6a6a"],
  ["749,439 763,432 802,540 781,549", "#606060"],
  ["763,432 1003,336 1274,342 1189,453 802,540", "#525252"],
  ["1274,342 1435,451 1455,647 1194,462 1189,453", "#636363"],
  ["802,540 1189,453 1194,462 816,551", "#7c7c7c"],
  ["781,549 802,540 816,551 793,560", "#b4b4b4"],
  ["516,707 781,549 793,560 523,720", "#b5b5b5"],
  ["523,720 793,560 1153,798 835,929", "#c2c2c2"],
  ["793,560 816,551 1167,784 1153,798", "#d3d3d3"],
  ["816,551 1194,462 1455,647 1455,652 1180,786 1175,787 1167,784", "#ffff99"],
  ["1167,784 1175,787 1180,788 1168,804 1153,798", "#b4b4b4"],
];

const Model = () => (
  <Scene viewBox="328 143 1533 932" role="img" aria-label="Concept1">
    {faces.map(([p, f]) => (
      <polygon key={p} points={p} fill={f} stroke="#161616" strokeWidth="1.5" strokeLinejoin="round" />
    ))}
    <path d="M1158 798L1174 790" stroke="#d6d6d6" strokeWidth="3" />
    <path d="M1168 804L1205 799L847 934" fill="none" stroke="#161616" strokeWidth="1.5" />
    <path d="M516 707L515 713L521 720" fill="none" stroke="#a9a9a9" strokeWidth="2" />
  </Scene>
);

const Cube3D = () => (
  <NavCube width="141" height="145" viewBox="60 9 423 435" aria-label="Cubo de navegación">
    <g fill="#9a9dbb">
      <path d="M231 66L264 31L298 66Z" /><path d="M231 391H298L264 426Z" />
      <path d="M102 195V261L67 228Z" /><path d="M426 195L461 228L426 261Z" />
      <path d="M208 51L213 73Q170 86 143 116L153 125L117 134L124 91L132 101Q165 63 208 51Z" />
      <path d="M320 51L315 75Q355 88 384 116L374 125L411 134L404 91L396 101Q365 63 320 51Z" />
      <circle cx="444" cy="48" r="18" />
    </g>
    <path d="M151 342L134 212" stroke="#0000ff" strokeWidth="5" />
    <g stroke="#26262c" strokeWidth="3" strokeLinejoin="round">
      <polygon points="177,157 213,137 340,140 350,150 349,180 336,322 320,337 178,316 158,180" fill="#b3b8cf" stroke="#7f84a2" />
      <polygon points="165,186 316,193 311,334 178,316" fill="#b9bfd3" />
      <polygon points="177,157 213,138 336,140 320,163" fill="#c6cbdd" />
      <path d="M320 163L316 193L346 180L336 140M177 157L165 186M346 180L338 318" fill="none" />
      <path d="M240 148H270L285 152H258Z" fill="#444" stroke="#444" />
    </g>
    <text x="195" y="277" fontFamily="Liberation Sans" fontWeight="700" fontSize="30" fill="#0a0a0a" stroke="#0a0a0a" strokeWidth="1" transform="rotate(3 195 277)">FRONT</text>
    <path d="M151 342L178 312" stroke="#00ff00" strokeWidth="5" />
    <path d="M178 312L204 279" stroke="#a2e8a8" strokeWidth="4" />
    <path d="M151 342L286 363" stroke="#ff0000" strokeWidth="5" />
    <path d="M333 362L363 351L393 362V400L363 411L333 400Z" fill="#777997" stroke="#666886" strokeWidth="2" />
    <path d="M333 362L363 351L393 362L363 373Z" fill="#9193ad" /><path d="M333 362L363 373V411L333 400Z" fill="#8587a3" />
    <path d="M405 372H442L424 391Z" fill="#3f3f60" />
  </NavCube>
);

const Cross3D = () => (
  <AxisCross width="60" height="56" viewBox="63 880 180 168" aria-label="Ejes">
    <path d="M103 1016V950" stroke="#20208a" strokeWidth="4" />
    <path d="M102 918L114 955H90Z" fill="#20208a" />
    <path d="M103 1016L118 998" stroke="#208a20" strokeWidth="5" /><circle cx="117" cy="995" r="9" fill="#208a20" />
    <path d="M103 1016L170 1021" stroke="#8a2020" strokeWidth="4" />
    <path d="M202 1023L168 1010V1032Z" fill="#8a2020" />
    <g fontFamily="DejaVu Sans Condensed" fontSize="27" fontWeight="700" fill="#111">
      <text x="104" y="911">Z</text><text x="126" y="986">Y</text><text x="204" y="1020">X</text>
    </g>
  </AxisCross>
);

export default function App() {
  return (
    <Window>
      <GlobalStyle />
      <TitleBar>
        <Ico n="logo" w={19} h={20} />
        <AppTitle>FreeCAD 0.20.1</AppTitle>
        <WindowButton aria-label="Minimizar"><svg width="12" height="12"><path d="M0 6.500H12" stroke="#888" /></svg></WindowButton>
        <WindowButton aria-label="Restaurar"><svg width="13" height="13" fill="none" stroke="#888"><rect x="1.500" y="3.500" width="8" height="8" rx="1" /><path d="M4 1.500H10Q11.500 1.500 11.500 3V9" /></svg></WindowButton>
        <WindowButton aria-label="Cerrar"><Cross size={13} color="#888" width={1} /></WindowButton>
      </TitleBar>
      <MenuBar>{menus.map((m) => <MenuItem key={m}>{m}</MenuItem>)}</MenuBar>
      <ToolRow>
        <Bar><Grip /><Tools items={fileTools} /></Bar>
        <Bar>
          <Grip /><Spacer />
          <Combo>
            <Ico n="wb" w={19} />
            <ComboSelect aria-label="Banco de trabajo" defaultValue="Part Design"><option>Part Design</option></ComboSelect>
            <svg width="10" height="6" fill="none" stroke="#444"><path d="M1 1L5 5L9 1" /></svg>
          </Combo>
        </Bar>
        <Bar><Grip /><Spacer /><Tools items={macroTools} /></Bar>
        <Bar $fill><Grip /><Tools items={measureTools} /></Bar>
      </ToolRow>
      <ToolRow>
        <Bar><Grip /><Tools items={viewTools} /></Bar>
        <Bar><Grip /><Spacer /><Tools items={structTools} /></Bar>
        <Bar $fill><Grip /><Tools items={designTools} /></Bar>
      </ToolRow>
      <Work>
        <Dock>
          <DockTitle>
            <h2>Vista combinada</h2>
            <DockButton aria-label="Flotar"><svg width="12" height="12" fill="none" stroke="#333" strokeWidth="2"><path d="M4 4V2H11V8H9" /><rect x="1" y="5" width="7" height="5" /></svg></DockButton>
            <DockButton aria-label="Cerrar panel"><Cross size={11} color="#333" width={2} /></DockButton>
          </DockTitle>
          <TabRow role="tablist">
            <Tab $on role="tab" aria-selected>Modelo</Tab>
            <Tab role="tab">Tareas</Tab>
          </TabRow>
          <Pane>
            <TreeBox>
              <TreeHead><span>Etiquetas &amp; Atributos</span><span>Descripción</span></TreeHead>
              <TreeList>
                <TreeRoot>Aplicación</TreeRoot>
                {tree.map((r) => (
                  <TreeRow key={r.n} $depth={r.d} $dim={r.dim} $bold={r.bold}>
                    <Twist aria-label={r.n} disabled={r.leaf}>
                      {!r.leaf && (
                        <svg width="10" height="10" fill="none" stroke={r.open ? "#111" : "#777"} strokeWidth="1.5">
                          <path d={r.open ? "M1 3L5 7L9 3" : "M3 1L7 5L3 9"} />
                        </svg>
                      )}
                    </Twist>
                    <Ico n={r.i} w={20} />
                    <span>{r.n}</span>
                  </TreeRow>
                ))}
              </TreeList>
              <ScrollTrack><ScrollThumb /></ScrollTrack>
            </TreeBox>
            <PropPane>
              <PropBox>
                <PropTable><thead><tr><th>Propiedades</th><th>Valor</th></tr></thead></PropTable>
              </PropBox>
            </PropPane>
            <TabRow $low role="tablist">
              <LowTab role="tab">Vista</LowTab>
              <LowTab $on role="tab" aria-selected>Datos</LowTab>
            </TabRow>
          </Pane>
        </Dock>
        <Center>
          <Viewport><Model /><Cube3D /><Cross3D /></Viewport>
          <DocTabs>
            <DocTab><Ico n="logo" w={20} h={20} /><DocName>Página de inicio</DocName><CloseTab aria-label="Cerrar Página de inicio"><Cross size={8} color="#fff" width={4} /></CloseTab></DocTab>
            <DocTab $on><Ico n="logo" w={20} h={20} /><DocName>Concept1 : 1</DocName><CloseTab $hot aria-label="Cerrar Concept1"><Cross size={8} color="#fff" width={4} /></CloseTab></DocTab>
          </DocTabs>
        </Center>
        <SideBar>
          <SideGrip />
          {sideTools.map((it, i) =>
            it === "|" ? <SideDivider key={i} /> : (
              <SideRow key={i} $menu={it.menu}>
                <ToolButton aria-label={it.t}><Ico n={it.n} /></ToolButton>
                {it.menu && <ArrowButton aria-label={it.t + ", menú"}><Caret /></ArrowButton>}
              </SideRow>
            )
          )}
        </SideBar>
      </Work>
      <StatusBar>
        <output>Preselected: Concept1.Body.Pocket004.Face28 (6.740187 mm, -193.106934 mm, 28.726896 mm)</output>
        <NavStyle>
          <svg width="12" height="18" fill="none" stroke="#333" strokeWidth="2"><rect x="1" y="1" width="10" height="16" rx="5" /><path d="M6 4V8" /></svg>
          CAD<Caret />
        </NavStyle>
      </StatusBar>
    </Window>
  );
}
